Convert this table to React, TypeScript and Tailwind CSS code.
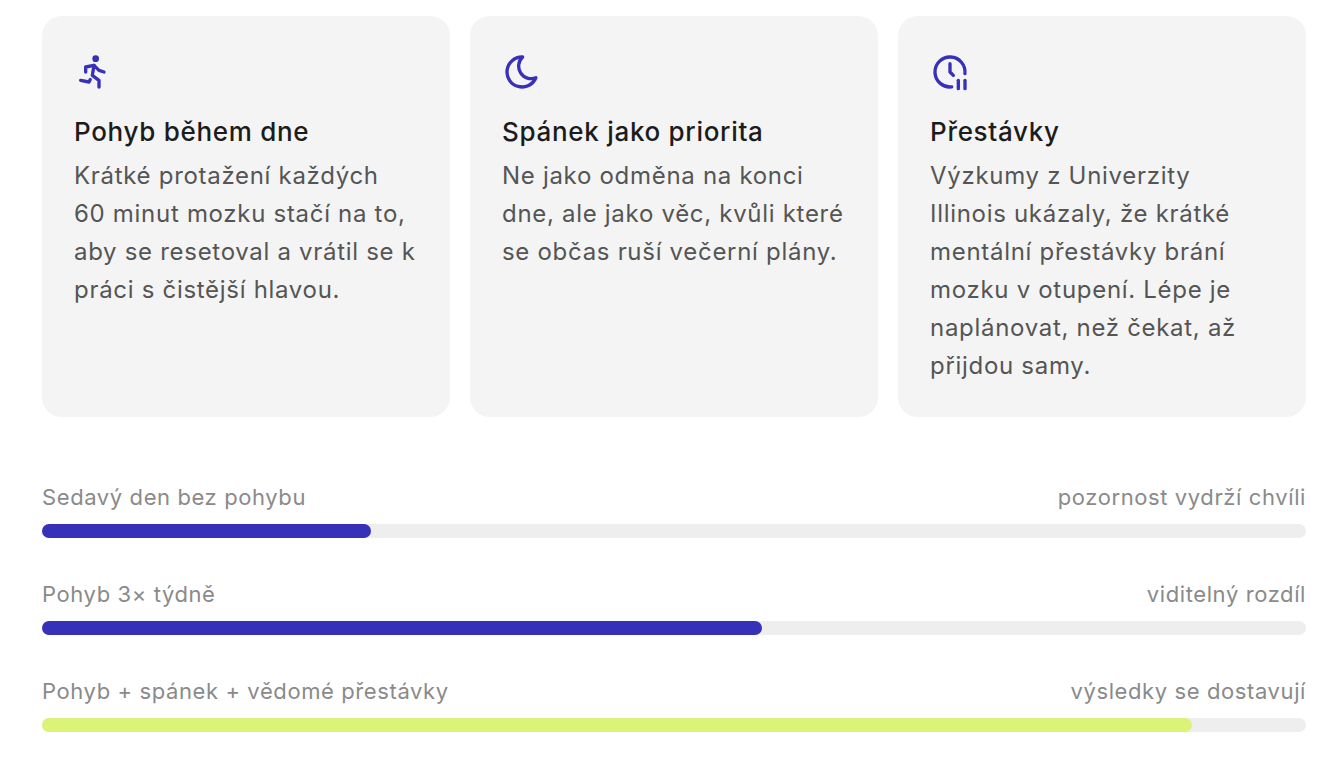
import { TbRun, TbMoon, TbClockPause } from "react-icons/tb";

const cards = [
  {
    icon: TbRun,
    title: "Pohyb během dne",
    lines: ["Krátké protažení každých", "60 minut mozku stačí na to,", "aby se resetoval a vrátil se k", "práci s čistější hlavou."],
  },
  {
    icon: TbMoon,
    title: "Spánek jako priorita",
    lines: ["Ne jako odměna na konci", "dne, ale jako věc, kvůli které", "se občas ruší večerní plány."],
  },
  {
    icon: TbClockPause,
    title: "Přestávky",
    lines: [
      "Výzkumy z Univerzity",
      "Illinois ukázaly, že krátké",
      "mentální přestávky brání",
      "mozku v otupení. Lépe je",
      "naplánovat, než čekat, až",
      "přijdou samy.",
    ],
  },
];

const bars = [
  { left: "Sedavý den bez pohybu", right: "pozornost vydrží chvíli", pct: 26, color: "bg-[#3730b9]" },
  { left: "Pohyb 3× týdně", right: "viditelný rozdíl", pct: 57, color: "bg-[#3730b9]" },
  { left: "Pohyb + spánek + vědomé přestávky", right: "výsledky se dostavují", pct: 91, color: "bg-[#dbf378]" },
];

export default function App() {
  return (
    <div
      className="min-h-screen bg-white pl-[42px] pt-4"
      style={{ fontFamily: "Inter, 'Noto Sans', sans-serif" }}
    >
      <div className="w-[1264px]">
        <div className="grid grid-cols-3 gap-5">
          {cards.map((c) => {
            const Icon = c.icon;
            return (
              <div key={c.title} className="rounded-[20px] bg-[#f4f4f4] px-8 pt-9 pb-8">
                <Icon className="h-10 w-10 text-[#3730b9]" />
                <h3 className="mt-[22px] text-[26px] leading-[36px] font-medium tracking-[0.7px] text-[#1c1c1c]">
                  {c.title}
                </h3>
                <p className="mt-[7px] text-[24px] leading-[38px] text-[#555555] tracking-[0.7px] whitespace-nowrap">
                  {c.lines.map((l, i) => (
                    <span key={i} className="block">
                      {l}
                    </span>
                  ))}
                </p>
              </div>
            );
          })}
        </div>

        <div className="mt-[66px] flex flex-col gap-[42px]">
          {bars.map((b) => (
            <div key={b.left}>
              <div className="flex justify-between text-[22px] leading-[28px] tracking-[0.6px] text-[#8a8a8a]">
                <span>{b.left}</span>
                <span>{b.right}</span>
              </div>
              <div className="mt-[13px] h-[14px] w-full rounded-full bg-[#eeeeee]">
                <div className={`h-full rounded-full ${b.color}`} style={{ width: `${b.pct}%` }} />
              </div>
            </div>
          ))}
        </div>
      </div>
    </div>
  );
}
